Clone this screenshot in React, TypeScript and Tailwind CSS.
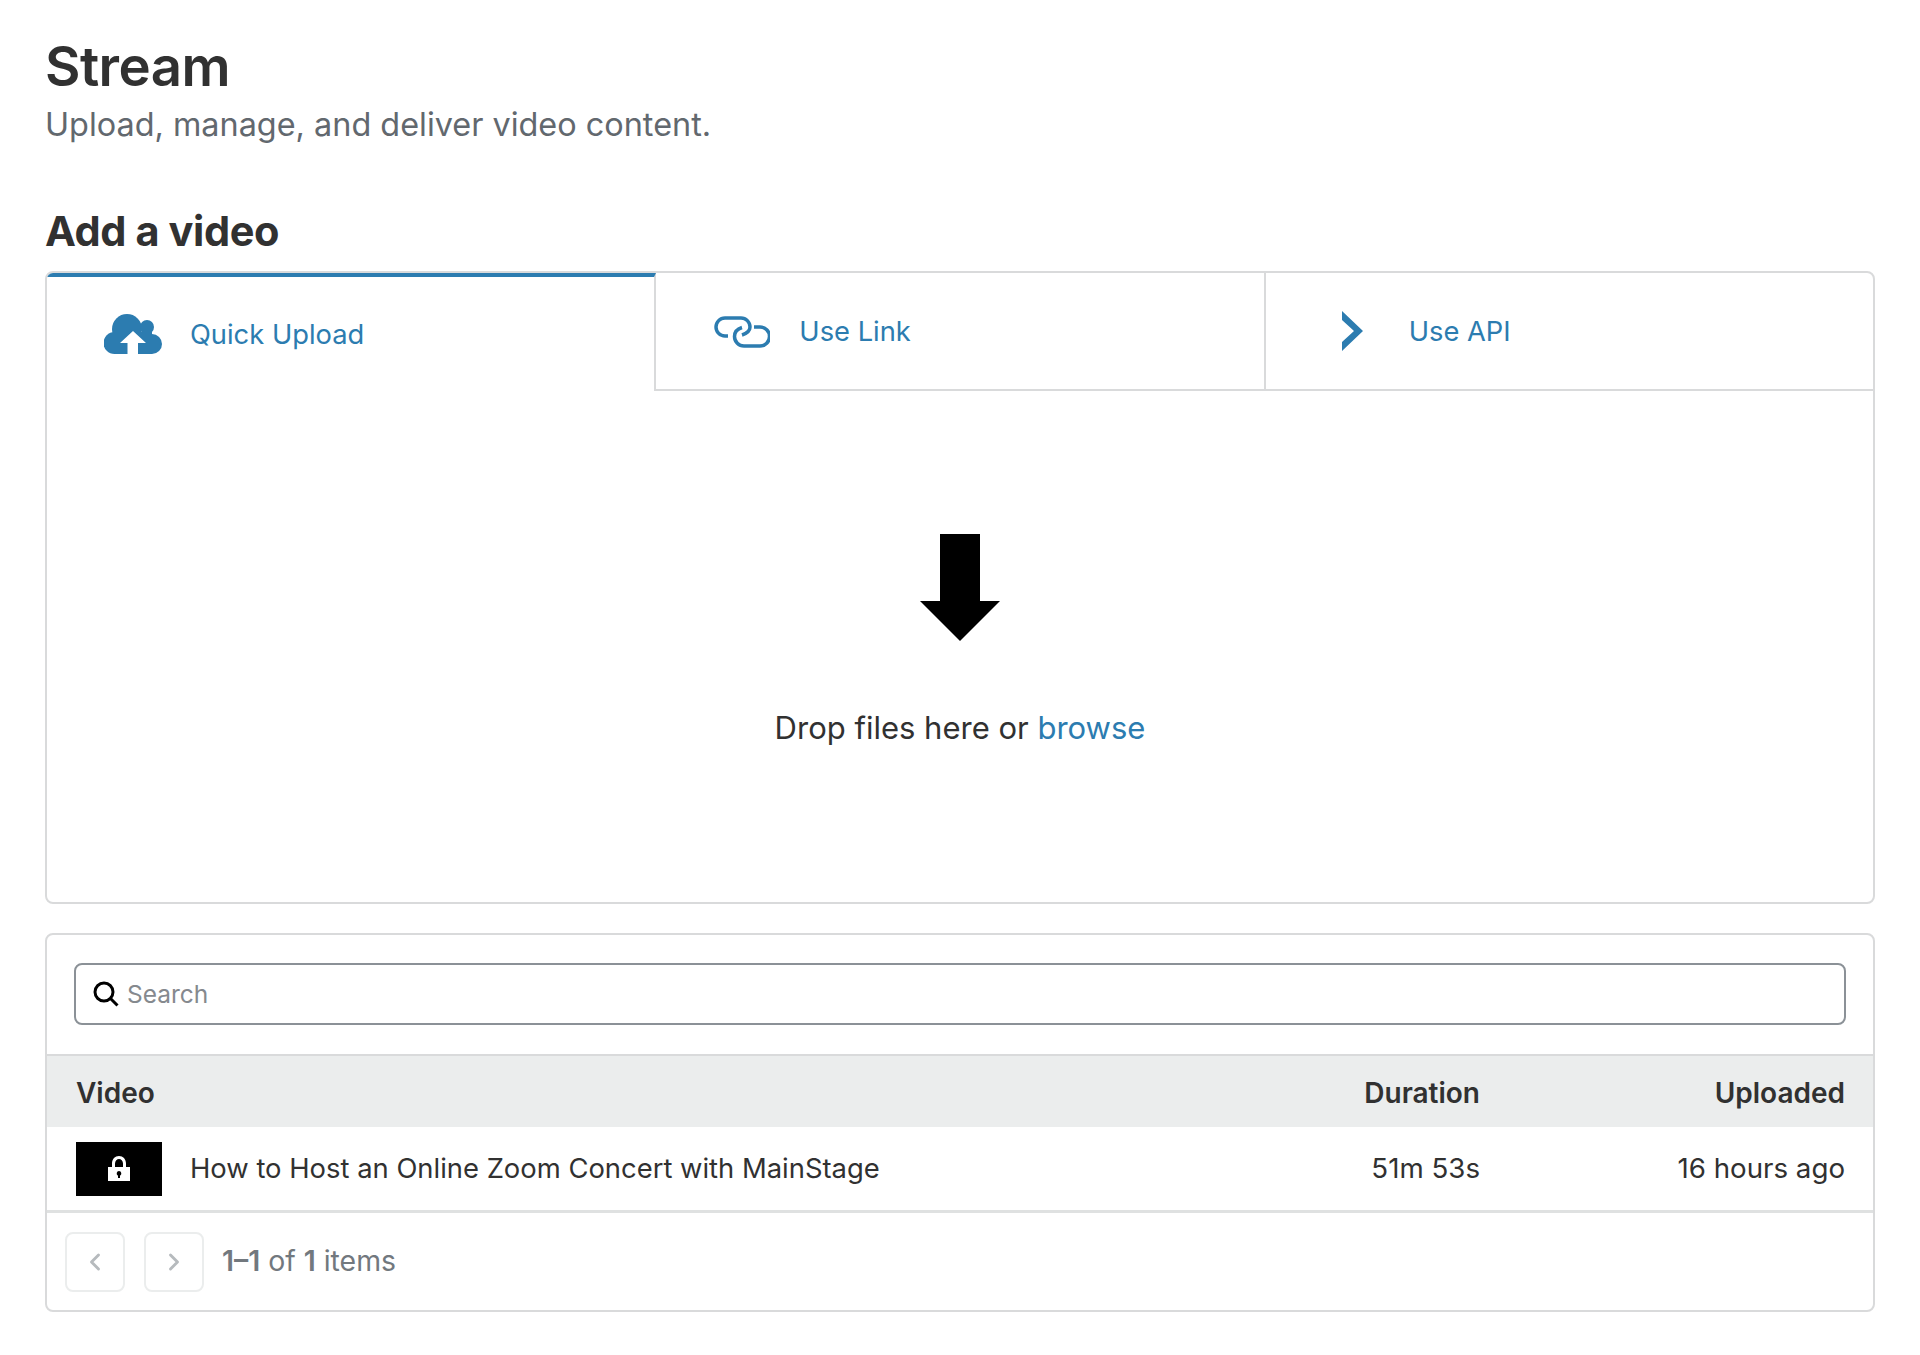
import { ChevronLeft, ChevronRight } from "lucide-react";

function CloudIcon() {
  return (
    <svg width="58" height="40" viewBox="0 0 58 40" className="shrink-0">
      <g fill="#2c7cb0">
        <circle cx="23" cy="15" r="15" />
        <circle cx="43" cy="13" r="7" />
        <circle cx="10.500" cy="29" r="11" />
        <circle cx="48" cy="30" r="10" />
        <rect x="10" y="18" width="38" height="22" />
      </g>
      <path fill="#fff" d="M29 17L42 29H34V40H23.500V29H16Z" />
    </svg>
  );
}

function LinkIcon() {
  return (
    <svg width="56" height="33" viewBox="0 0 56 33" fill="none" stroke="#2c7cb0" strokeWidth="3.500" className="shrink-0">
      <path d="M14 21H11A9 9 0 0 1 11 3H27A9 9 0 0 1 36 12C36 15 34 18 28 20" />
      <path d="M40 12H46A9.500 9.500 0 0 1 46 31H30A9.500 9.500 0 0 1 20.500 21.500C20.500 17 23 14 28 12.500" />
    </svg>
  );
}

function ApiIcon() {
  return (
    <svg width="22" height="40" viewBox="0 0 22 40" className="shrink-0">
      <path fill="#2c7cb0" d="M0 0L21 20L0 40V31L12 20L0 9Z" />
    </svg>
  );
}

function Tab({ icon, label, active, last }: { icon: React.ReactNode; label: string; active?: boolean; last?: boolean }) {
  return (
    <div
      className={
        "flex flex-1 items-center text-[#2c7cb0] h-[118px] " +
        (active ? "border-t-[4px] border-t-[#2c7cb0] " : "border-b-2 border-b-[#d9dadb] ") +
        (last ? "" : "border-r-2 border-r-[#d9dadb] ")
      }
    >
      {icon}
      <span className="pt-[2px] text-[27.300px] leading-none">{label}</span>
    </div>
  );
}

export default function App() {
  return (
    <div className="min-h-[1355px] bg-white pt-[32px] px-[45px] font-['Inter','Liberation_Sans',sans-serif] text-[#313131]">
      <h1 className="text-[54.500px] leading-[68px] font-semibold tracking-[-0.01em]">Stream</h1>
      <p className="mt-[5px] text-[32.400px] leading-[40px] text-[#62686e]">Upload, manage, and deliver video content.</p>
      <h2 className="mt-[61px] text-[41.500px] leading-[50px] font-bold tracking-[-0.01em]">Add a video</h2>

      <section className="mt-[15px] h-[633px] overflow-hidden rounded-[8px] border-2 border-[#d9dadb]">
        <div className="flex">
          <Tab
            active
            label="Quick Upload"
            icon={
              <span className="ml-[57px] mr-[28px] flex">
                <CloudIcon />
              </span>
            }
          />
          <Tab
            label="Use Link"
            icon={
              <span className="ml-[58px] mr-[29px] flex">
                <LinkIcon />
              </span>
            }
          />
          <Tab
            last
            label="Use API"
            icon={
              <span className="ml-[76px] mr-[45px] flex">
                <ApiIcon />
              </span>
            }
          />
        </div>
        <div className="flex flex-col items-center pt-[143px]">
          <svg width="80" height="107" viewBox="0 0 80 107">
            <path d="M20 0H60V67H80L40 107L0 67H20Z" fill="#000" />
          </svg>
          <p className="mt-[65px] text-[31px] leading-[44px]">
            Drop files here or <span className="text-[#2c7cb0]">browse</span>
          </p>
        </div>
      </section>

      <section className="mt-[29px] overflow-hidden rounded-[8px] border-2 border-[#d9dadb]">
        <div className="px-[27px] pt-[28px] pb-[29px]">
          <div className="flex h-[62px] items-center rounded-[8px] border-2 border-[#8b9197] pl-[17px]">
            <svg width="26" height="26" viewBox="0 0 26 26" fill="none" stroke="#000" strokeWidth="3" className="shrink-0">
              <circle cx="11" cy="11" r="9" />
              <path d="M17.500 17.500L24.500 24.500" />
            </svg>
            <span className="ml-[8px] text-[24.500px] text-[#85898e]">Search</span>
          </div>
        </div>
        <div className="flex h-[73px] items-center justify-between border-t-2 border-[#d9dadb] bg-[#ebeded] pl-[29px] pr-[28px] pt-[2px] text-[28px] font-semibold">
          <span>Video</span>
          <div className="flex">
            <span className="w-[205px] text-right">Duration</span>
            <span className="w-[365px] text-right">Uploaded</span>
          </div>
        </div>
        <div className="flex h-[86px] items-center justify-between border-b-[3px] border-[#dfe1e1] pl-[29px] pr-[28px] pt-[1px] text-[27.700px]">
          <div className="flex items-center">
            <div className="flex h-[54px] w-[86px] items-center justify-center bg-black">
              <svg width="22" height="26" viewBox="0 0 22 26">
                <path fill="#fff" fillRule="evenodd" d="M4 11V7.500C4 3 7 0 11 0S18 3 18 7.500V11H22V25H0V11ZM7 11H15V7.500C15 5 13 3 11 3S7 5 7 7.500ZM11 15A2.500 2.500 0 0 0 10 19.700V22H12V19.700A2.500 2.500 0 0 0 11 15Z" />
              </svg>
            </div>
            <span className="ml-[28px] text-[27.400px]">How to Host an Online Zoom Concert with MainStage</span>
          </div>
          <div className="flex">
            <span className="w-[205px] text-right">51m 53s</span>
            <span className="w-[365px] text-right">16 hours ago</span>
          </div>
        </div>
        <div className="flex h-[97px] items-center pl-[18px] text-[28.400px] text-[#72787e]">
          <button className="flex h-[60px] w-[60px] items-center justify-center rounded-[8px] border-2 border-[#ebeded] text-[#b6babd]">
            <ChevronLeft size={28} strokeWidth={2.500} />
          </button>
          <button className="ml-[19px] flex h-[60px] w-[60px] items-center justify-center rounded-[8px] border-2 border-[#ebeded] text-[#b6babd]">
            <ChevronRight size={28} strokeWidth={2.500} />
          </button>
          <span className="ml-[18px]">
            <b className="font-semibold">1–1</b> of <b className="font-semibold">1</b> items
          </span>
        </div>
      </section>
    </div>
  );
}
